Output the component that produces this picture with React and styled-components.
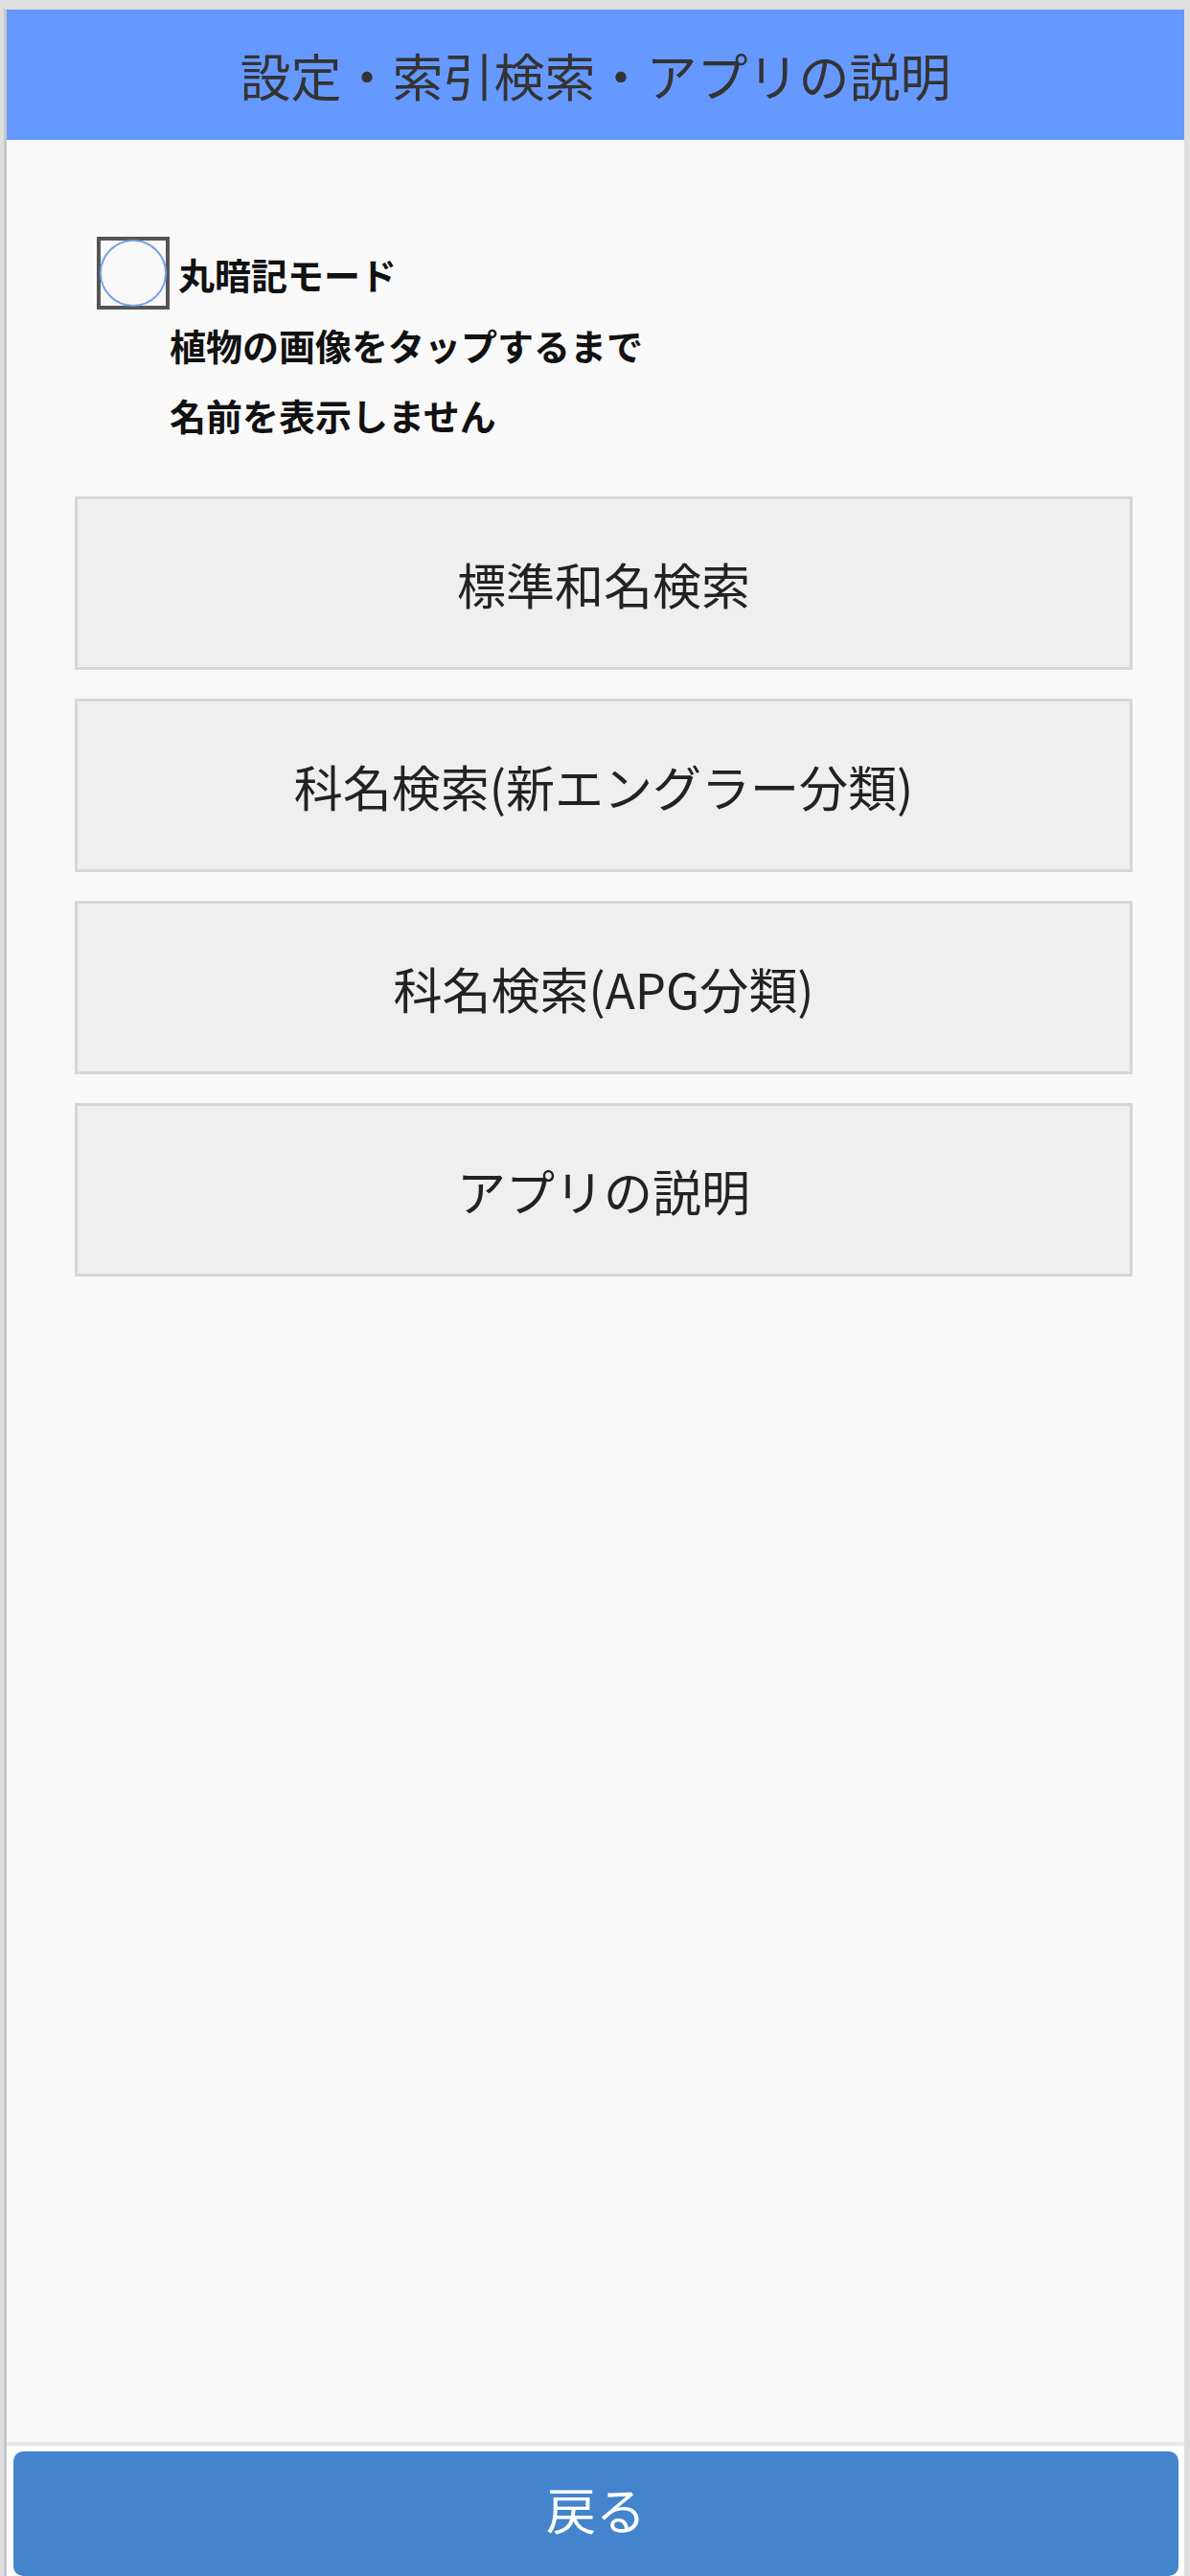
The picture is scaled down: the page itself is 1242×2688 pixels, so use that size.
import React, { useState } from "react";
import styled, { createGlobalStyle } from "styled-components";

const GlobalStyle = createGlobalStyle`
  html, body {
    margin: 0;
    padding: 0;
    height: 2688px;
    overflow: hidden;
    background: #dedede;
  }
  body {
    font-family: "Noto Sans CJK JP", "Noto Sans", sans-serif;
  }
  #root {
    padding: 10px 6px 0 4px;
    box-sizing: border-box;
    height: 2688px;
  }
`;

const Page = styled.div`
  display: flex;
  flex-direction: column;
  height: 2678px;
  border-left: 3px solid #c6c6c6;
  overflow: hidden;
  background: #fff;
`;

const Header = styled.header`
  height: 136px;
  flex: none;
  display: flex;
  align-items: center;
  justify-content: center;
  background: #6699ff;
`;

const Title = styled.h1`
  margin: 0;
  font-size: 53px;
  font-weight: 400;
  color: #333;
`;

const Content = styled.main`
  flex: 1;
  background: #f9f9f9;
  padding: 101px 54px 0 71px;
`;

const Setting = styled.div`
  margin-left: 23px;
  font-size: 38px;
  font-weight: 700;
  color: #111;
`;

const CheckRow = styled.label`
  display: flex;
  align-items: center;
  height: 76px;
  cursor: pointer;
`;

const Check = styled.span`
  position: relative;
  flex: none;
  box-sizing: border-box;
  width: 76px;
  height: 76px;
  border: 4px solid #555;
  margin-right: 9px;
  background: #f9f9f9;

  &::after {
    content: "";
    position: absolute;
    left: -1px;
    top: -1px;
    width: 66px;
    height: 66px;
    border: 2px solid ${(p) => (p.$on ? "#3b7ddd" : "#76a3e6")};
    background: ${(p) => (p.$on ? "#3b7ddd" : "transparent")};
    border-radius: 50%;
  }
`;

const Note = styled.div`
  padding-left: 76px;
  line-height: 73px;
`;

const ButtonList = styled.div`
  display: flex;
  flex-direction: column;
  gap: 30px;
  margin-top: 49px;
`;

const MenuButton = styled.button`
  height: 181px;
  box-sizing: border-box;
  border: 3px solid #d6d6d6;
  background: #efefef;
  font-family: inherit;
  font-size: 51px;
  color: #222;
  cursor: pointer;
`;

const Footer = styled.footer`
  flex: none;
  border-top: 4px solid #e8e8e8;
  background: #fff;
  padding: 6px 6px 0 7px;
`;

const BackButton = styled.button`
  width: 100%;
  height: 130px;
  padding-bottom: 12px;
  border: none;
  border-radius: 10px;
  background: #4384cc;
  color: #fff;
  font-family: inherit;
  font-size: 52px;
  cursor: pointer;
`;

const menus = [
  "標準和名検索",
  "科名検索(新エングラー分類)",
  "科名検索(APG分類)",
  "アプリの説明",
];

const App = () => {
  const [memorize, setMemorize] = useState(false);

  return (
    <>
      <GlobalStyle />
      <Page>
        <Header>
          <Title>設定・索引検索・アプリの説明</Title>
        </Header>
        <Content>
          <Setting>
            <CheckRow onClick={() => setMemorize(!memorize)}>
              <Check $on={memorize} />
              丸暗記モード
            </CheckRow>
            <Note>
              植物の画像をタップするまで
              <br />
              名前を表示しません
            </Note>
          </Setting>
          <ButtonList>
            {menus.map((m) => (
              <MenuButton key={m}>{m}</MenuButton>
            ))}
          </ButtonList>
        </Content>
        <Footer>
          <BackButton>戻る</BackButton>
        </Footer>
      </Page>
    </>
  );
};

export default App;
